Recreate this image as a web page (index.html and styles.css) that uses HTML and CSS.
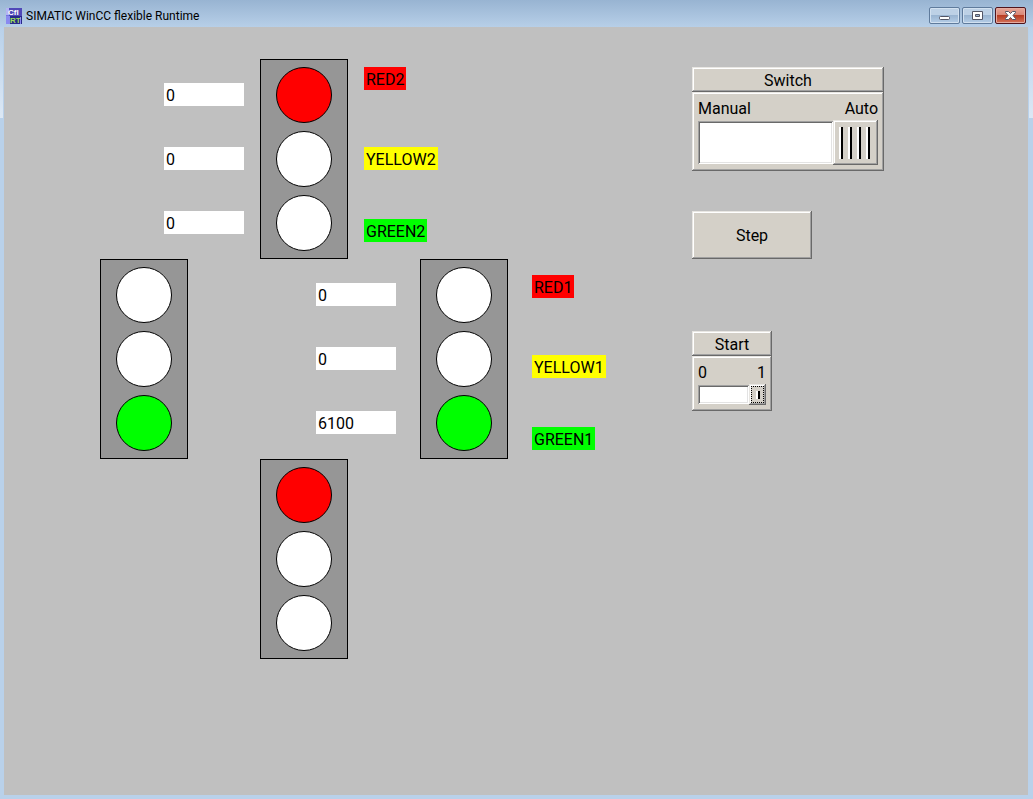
FILE: index.html
```html
<!DOCTYPE html>
<html lang="en">
<head>
<meta charset="utf-8">
<title>SIMATIC WinCC flexible Runtime</title>
<link rel="stylesheet" href="styles.css">
</head>
<body>
<div class="window">
  <header class="titlebar">
    <svg class="app-icon" viewBox="0 0 16 16" aria-hidden="true">
      <rect width="16" height="16" fill="#7474e0"/>
      <rect width="3" height="7" fill="#b4b4f4"/>
      <rect x="3" width="13" height="8" fill="#5048b8"/>
      <rect y="8" width="4" height="8" fill="#8a8af0"/>
      <rect x="4" y="8" width="12" height="8" fill="#28288a"/>
      <rect x="14" y="9" width="1" height="7" fill="#8a8af0"/>
      <text class="icon-text icon-top" x="2" y="7">Cfl</text>
      <text class="icon-text icon-bottom" x="4" y="15">RT</text>
    </svg>
    <h1 class="title">SIMATIC WinCC flexible Runtime</h1>
    <div class="window-buttons">
      <button class="window-button" type="button" aria-label="Minimize">
        <svg viewBox="0 0 13 11"><rect x="1.500" y="6.500" width="10" height="3" rx="1" fill="#fff" stroke="#535666"/></svg>
      </button>
      <button class="window-button" type="button" aria-label="Maximize">
        <svg viewBox="0 0 13 11"><path d="M1.500 1.500h10v8h-10zM4.500 4.500v2h4v-2z" fill="#fff" fill-rule="evenodd" stroke="#535666"/></svg>
      </button>
      <button class="window-button close" type="button" aria-label="Close">
        <svg viewBox="0 0 13 11"><path d="M1.500 1.500h3l2 2 2-2h3v1l-2.500 3 2.500 3v1h-3l-2-2-2 2h-3v-1l2.500-3-2.500-3z" fill="#fff" stroke="#535666"/></svg>
      </button>
    </div>
  </header>

  <main class="screen">
    <section class="crossing" aria-label="Crossing">
      <div class="row north">
        <div class="fields">
          <input class="field" type="text" value="0" aria-label="Red 2 time">
          <input class="field" type="text" value="0" aria-label="Yellow 2 time">
          <input class="field" type="text" value="0" aria-label="Green 2 time">
        </div>
        <div class="signal"><span class="lamp red"></span><span class="lamp"></span><span class="lamp"></span></div>
        <div class="tags">
          <span class="tag red">RED2</span>
          <span class="tag yellow">YELLOW2</span>
          <span class="tag green">GREEN2</span>
        </div>
      </div>
      <div class="row middle">
        <div class="signal"><span class="lamp"></span><span class="lamp"></span><span class="lamp green"></span></div>
        <div class="fields">
          <input class="field" type="text" value="0" aria-label="Red 1 time">
          <input class="field" type="text" value="0" aria-label="Yellow 1 time">
          <input class="field" type="text" value="6100" aria-label="Green 1 time">
        </div>
        <div class="signal"><span class="lamp"></span><span class="lamp"></span><span class="lamp green"></span></div>
        <div class="tags">
          <span class="tag red">RED1</span>
          <span class="tag yellow">YELLOW1</span>
          <span class="tag green">GREEN1</span>
        </div>
      </div>
      <div class="row south">
        <div class="signal"><span class="lamp red"></span><span class="lamp"></span><span class="lamp"></span></div>
      </div>
    </section>

    <section class="controls" aria-label="Controls">
      <div class="panel">
        <label class="panel-head raised" for="mode">Switch</label>
        <div class="panel-body raised">
          <div class="ends"><span>Manual</span><span>Auto</span></div>
          <input class="switch" id="mode" type="checkbox" role="switch" checked>
        </div>
      </div>
      <button class="step raised" type="button">Step</button>
      <div class="panel small">
        <label class="panel-head raised" for="start">Start</label>
        <div class="panel-body raised">
          <div class="ends"><span>0</span><span>1</span></div>
          <input class="switch" id="start" type="checkbox" role="switch" checked>
        </div>
      </div>
    </section>
  </main>
</div>
</body>
</html>
```
FILE: styles.css
```css
* { box-sizing: border-box; }

body {
  margin: 0;
  font: 16px/23px Roboto, "Noto Sans", sans-serif;
  color: #000;
}

.window {
  display: flex;
  flex-direction: column;
  min-height: 100vh;
  padding: 0 5px 4px 4px;
  background:
    linear-gradient(#b9d1ea, #dce8f5) 0 27px / 3px 91px no-repeat,
    linear-gradient(#b9d1ea, #dce8f5) 100% 27px / 4px 91px no-repeat,
    linear-gradient(#98b4d2, #b7cfe8) 0 0 / 100% 27px no-repeat,
    #b9d1ea;
}

.titlebar {
  display: flex;
  align-items: center;
  gap: 4px;
  height: 27px;
  padding: 4px 2px 0;
}

.app-icon { width: 16px; height: 16px; }
.icon-text { font: bold 8px "Liberation Sans", sans-serif; }
.icon-top { fill: #fff; }
.icon-bottom { fill: #9bdc5a; }

.title {
  flex: 1;
  margin: 0;
  font-size: 12px;
  font-weight: 400;
  line-height: 16px;
}

.window-buttons { display: flex; gap: 2px; }

.window-button {
  display: flex;
  align-items: center;
  justify-content: center;
  width: 31px;
  height: 17px;
  padding: 0;
  border: 1px solid #5f7b9c;
  border-radius: 2px;
  background: linear-gradient(#bdd1e6 50%, #9ab5d2 50%, #b4cde6);
  box-shadow: inset 0 0 0 1px #d2e1f0;
}
.window-button svg { width: 13px; height: 11px; }
.window-button.close {
  border-color: #50141c;
  background: linear-gradient(#e6a698, #d98474 50%, #b83c22 50%, #d3725a);
  box-shadow: inset 0 0 0 1px #e5aba0;
}

.screen {
  flex: 1;
  display: flex;
  align-items: flex-start;
  padding: 32px 0 32px 96px;
  background: #c0c0c0;
}

.crossing { flex: none; width: 592px; }

.row { display: flex; gap: 16px; }
.north { padding-left: 64px; }
.middle { gap: 24px; }
.middle .fields { margin-left: 104px; }
.south { padding-left: 160px; }

.signal {
  display: flex;
  flex-direction: column;
  align-items: center;
  gap: 8px;
  width: 88px;
  padding: 7px 0;
  border: 1px solid #000;
  background: #969696;
}

.lamp {
  width: 56px;
  height: 56px;
  border: 1px solid #000;
  border-radius: 50%;
  background: #fff;
}

.fields {
  display: flex;
  flex-direction: column;
  gap: 41px;
  padding-top: 24px;
}

.field {
  width: 80px;
  height: 23px;
  padding: 2px 2px 0;
  border: 0;
  background: #fff;
  color: #000;
  font: inherit;
  line-height: 21px;
}

.tags {
  display: flex;
  flex-direction: column;
  align-items: flex-start;
  padding-top: 8px;
}
.middle .tags { padding-top: 16px; }

.tag {
  padding: 2px 2px 0;
  line-height: 21px;
}
.tag.yellow { margin: 57px 0 49px; }

.red { background: #f00; }
.yellow { background: #ff0; }
.green { background: #0f0; }

.controls {
  display: flex;
  flex-direction: column;
  align-items: flex-start;
  gap: 40px;
  padding-top: 8px;
}

.raised {
  border: 0;
  background: #d4d0c8;
  box-shadow:
    inset -1px -1px #696969,
    inset 1px 1px #e8e6e2,
    inset -2px -2px #a0a0a0,
    inset 2px 2px #fff;
}

.panel { width: 192px; }

.panel-head {
  display: block;
  height: 25px;
  padding-top: 2px;
  text-align: center;
}

.panel-body { padding: 5px 6px 6px; }

.ends {
  display: flex;
  justify-content: space-between;
}

.step {
  width: 120px;
  height: 48px;
  color: #000;
  font: inherit;
}

.switch {
  appearance: none;
  display: flex;
  width: 100%;
  height: 45px;
  margin: 0;
}
.switch::before {
  content: "";
  flex: 1;
  margin: 1px 0;
  background: #fff;
  box-shadow:
    inset 1px 1px #a0a0a0,
    inset -1px -1px #fff,
    inset 2px 2px #696969,
    inset -2px -2px #e3e3e3;
}
.switch::after {
  content: "";
  width: 45px;
  background:
    repeating-linear-gradient(90deg, #fff 0 2px, #000 2px 4px, transparent 4px 9px) 6px 7px / 31px 32px no-repeat,
    #d4d0c8;
  box-shadow:
    inset -1px -1px #696969,
    inset 1px 1px #e8e6e2,
    inset -2px -2px #a0a0a0,
    inset 2px 2px #fff;
}
.switch:not(:checked) { flex-direction: row-reverse; }

.small { width: 80px; margin-top: 32px; }
.small .switch { height: 21px; }
.small .switch::after {
  width: 17px;
  outline: 1px dotted #000;
  outline-offset: -3px;
  background:
    linear-gradient(90deg, #fff 0 2px, #000 2px 4px) 7px 7px / 4px 8px no-repeat,
    #d4d0c8;
}
```
